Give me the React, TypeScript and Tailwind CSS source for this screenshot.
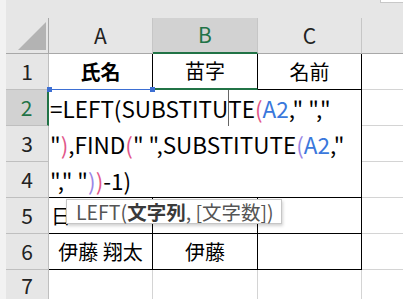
import React from "react";

const font = "font-['Noto_Sans_CJK_JP','Noto_Sans',sans-serif]";

function RowHead({ n, active, last }: { n: number; active?: boolean; last?: boolean }) {
  if (active) {
    return (
      <div className="w-[43px] h-[36px] shrink-0 flex items-center justify-center bg-[#d2d2d2] border-r-2 border-r-[#217346] border-b border-b-[#bfbfbf] text-[#217346] text-[21px]">
        {n}
      </div>
    );
  }
  if (last) {
    return (
      <div className="w-[43px] h-[29px] shrink-0 flex items-start justify-center pt-[2px] bg-[#e6e6e6] border-r border-[#bfbfbf] text-[#222] text-[21px] leading-[27px]">
        {n}
      </div>
    );
  }
  return (
    <div className="w-[43px] h-[36px] shrink-0 flex items-center justify-center bg-[#e6e6e6] border-r border-b border-[#bfbfbf] text-[#222] text-[21px]">
      {n}
    </div>
  );
}

export default function App() {
  const pink = "text-[#e2578a]";
  const purple = "text-[#9a86e6]";
  const blue = "text-[#3a78dc]";

  return (
    <div className={`w-[403px] h-[299px] overflow-hidden bg-white flex ${font}`}>
      <div className="w-[6px] shrink-0 bg-[#f2f2f2]" />
      <div className="flex-1 flex flex-col">
        {/* strip above the headers */}
        <div className="h-[18px] shrink-0 bg-[#e6e6e6] flex justify-end items-start">
          <div className="w-[23px] h-[3px] bg-white border-l border-b border-[#c8c8c8]" />
        </div>

        {/* column headers */}
        <div className="h-[36px] shrink-0 flex bg-[#e6e6e6] text-[21px] text-[#222]">
          <div className="w-[43px] shrink-0 border-r border-b border-[#a8a8a8] flex items-end justify-end pr-[2px] pb-[3px]">
            <svg width="28" height="28" viewBox="0 0 28 28">
              <polygon points="28,0 28,28 0,28" fill="#b3b3b3" />
            </svg>
          </div>
          <div className="w-[104px] shrink-0 border-r border-b border-r-[#c6c6c6] border-b-[#a8a8a8] flex items-center justify-center">
            A
          </div>
          <div className="w-[105px] shrink-0 bg-[#d2d2d2] border-r border-r-[#c6c6c6] border-b-2 border-b-[#217346] flex items-center justify-center text-[#217346]">
            B
          </div>
          <div className="w-[104px] shrink-0 border-r border-b border-r-[#c6c6c6] border-b-[#a8a8a8] flex items-center justify-center">
            C
          </div>
          <div className="flex-1 border-b border-[#a8a8a8]" />
        </div>

        {/* row 1 */}
        <div className="h-[36px] shrink-0 flex text-[20px] text-black">
          <RowHead n={1} />
          <div className="relative w-[104px] shrink-0 border-r border-r-black border-b border-b-[#3d6fd3] flex items-center justify-center font-bold">
            氏名
            <div className="absolute -left-[2px] -bottom-[3px] w-[5px] h-[5px] bg-[#3d6fd3]" />
            <div className="absolute -right-[3px] -bottom-[3px] w-[5px] h-[5px] bg-[#3d6fd3]" />
          </div>
          <div className="w-[105px] shrink-0 border-r border-r-black border-b-2 border-b-[#217346] flex items-center justify-center">
            苗字
          </div>
          <div className="w-[104px] shrink-0 border-r border-b border-black flex items-center justify-center">
            名前
          </div>
          <div className="flex-1 border-b border-[#d4d4d4]" />
        </div>

        {/* rows 2-4: in-cell edit */}
        <div className="h-[108px] shrink-0 flex">
          <div className="flex flex-col">
            <RowHead n={2} active />
            <RowHead n={3} />
            <RowHead n={4} />
          </div>
          <div className="w-[313px] shrink-0 h-[108px] bg-white border-r border-b border-black pl-[1px] text-[22.5px] leading-[36px] text-black whitespace-pre">
            <div className="h-[36px]">
              =LEFT(SUBSTITU
              <span className="inline-block w-px h-[36px] -mr-px align-top bg-[#666]" />
              TE<span className={pink}>(</span>
              <span className={blue}>A2</span>," ","
            </div>
            <div className="h-[36px]">
              "<span className={pink}>)</span>,FIND<span className={pink}>(</span>" ",SUBSTITUTE
              <span className={purple}>(</span>
              <span className={blue}>A2</span>,"
            </div>
            <div className="h-[35px]">
              "," "<span className={purple}>)</span>
              <span className={pink}>)</span>-1)
            </div>
          </div>
          <div className="flex-1 flex flex-col">
            <div className="h-[36px] border-b border-[#d4d4d4]" />
            <div className="h-[36px] border-b border-[#d4d4d4]" />
            <div className="h-[36px] border-b border-[#d4d4d4]" />
          </div>
        </div>

        {/* row 5 with tooltip */}
        <div className="relative h-[36px] shrink-0 flex text-[20px] text-black">
          <RowHead n={5} />
          <div className="w-[104px] shrink-0 border-r border-b border-black flex items-center pl-[2px]">
            日
          </div>
          <div className="w-[105px] shrink-0 border-r border-b border-black" />
          <div className="w-[104px] shrink-0 border-r border-b border-black" />
          <div className="flex-1 border-b border-[#d4d4d4]" />
          <div className="absolute left-[60px] top-[1px] w-[216px] h-[25px] bg-white border border-[#c6c6c6] shadow-[1px_2px_3px_rgba(0,0,0,0.18)] flex items-center pl-[9px] text-[19.5px] leading-[23px] text-[#555] whitespace-pre">
            LEFT(<span className="font-bold text-[#3a3a3a]">文字列</span>, [文字数])
          </div>
        </div>

        {/* row 6 */}
        <div className="h-[36px] shrink-0 flex text-[20px] text-black">
          <RowHead n={6} />
          <div className="w-[104px] shrink-0 border-r border-b border-black flex items-center justify-center whitespace-pre">
            伊藤 翔太
          </div>
          <div className="w-[105px] shrink-0 border-r border-b border-black flex items-center justify-center">
            伊藤
          </div>
          <div className="w-[104px] shrink-0 border-r border-b border-black" />
          <div className="flex-1 border-b border-[#d4d4d4]" />
        </div>

        {/* row 7 */}
        <div className="h-[29px] shrink-0 flex">
          <RowHead n={7} last />
          <div className="w-[104px] shrink-0 border-r border-[#d4d4d4]" />
          <div className="w-[105px] shrink-0 border-r border-[#d4d4d4]" />
          <div className="w-[104px] shrink-0 border-r border-[#d4d4d4]" />
          <div className="flex-1" />
        </div>
      </div>
    </div>
  );
}
